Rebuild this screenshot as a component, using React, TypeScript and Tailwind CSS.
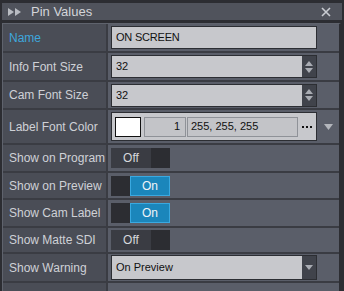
import React from "react";

const font = { fontFamily: '"Liberation Sans", Arial, sans-serif' };

function Row({
  label,
  h,
  active,
  children,
}: {
  label: string;
  h: string;
  active?: boolean;
  children?: React.ReactNode;
}) {
  return (
    <div className={`flex border-b-2 border-[#3a3c43] ${h}`}>
      <div
        className={`flex w-[105px] items-center border-r-2 border-[#3a3c43] bg-[#4a4d56] pl-[6px] text-[12px] ${
          active ? "text-[#3ea6dc]" : "text-[#cfd1d6]"
        }`}
      >
        {label}
      </div>
      <div className="flex flex-1 items-center bg-[#5a5e69] pl-[3px]">{children}</div>
    </div>
  );
}

function TextBox({ value, spin }: { value: string; spin?: boolean }) {
  return (
    <div className="flex h-[23px] w-[206px] items-stretch border border-[#2c2e33] bg-[#c7c8cc]">
      <div className="flex flex-1 items-center pl-[4px] text-[11px] tracking-[-0.2px] text-[#111]">{value}</div>
      {spin && (
        <div className="flex w-[14px] flex-col items-center justify-center gap-[2px] bg-[#40434b]">
          <svg width="8" height="5" viewBox="0 0 8 5">
            <path d="M0 5 L4 0 L8 5 Z" fill="#a9acb3" />
          </svg>
          <svg width="8" height="5" viewBox="0 0 8 5">
            <path d="M0 0 L4 5 L8 0 Z" fill="#a9acb3" />
          </svg>
        </div>
      )}
    </div>
  );
}

function Toggle({ on }: { on: boolean }) {
  return (
    <div className="flex h-[20px] w-[59px] bg-[#2c2d32]">
      {on ? (
        <>
          <div className="w-[19px]" />
          <div className="flex flex-1 items-center justify-center border border-[#3aa9e0] bg-[#1b86bb] text-[12px] text-[#eef4f8]">
            On
          </div>
        </>
      ) : (
        <>
          <div className="flex w-[40px] items-center justify-center bg-[#3a3c43] text-[12px] text-[#d6d8dc]">
            Off
          </div>
          <div className="flex-1" />
        </>
      )}
    </div>
  );
}

export default function App() {
  return (
    <div className="h-[291px] w-[344px] overflow-hidden bg-[#2c2d32]" style={font}>
      {/* header */}
      <div className="mx-[2px] mt-[3px] flex h-[17px] items-center bg-[#50535c]">
        <svg width="14" height="8" viewBox="0 0 14 8" className="ml-[6px]">
          <path d="M0 0 L6 4 L0 8 Z M7 0 L13 4 L7 8 Z" fill="#b9bcc2" />
        </svg>
        <span className="ml-[9px] text-[13px] text-[#d3d5d9]">Pin Values</span>
        <svg width="10" height="10" viewBox="0 0 10 10" className="ml-auto mr-[11px]">
          <path d="M1 1 L9 9 M9 1 L1 9" stroke="#c9ccd2" strokeWidth="1.6" />
        </svg>
      </div>

      {/* panel */}
      <div className="ml-[2px] mt-[3px] w-[339px] border-l border-r-2 border-t border-l-[#5f636d] border-r-[#2c2d32] border-t-[#5f636d] bg-[#5a5e69]">
        <Row label="Name" h="h-[29px]" active>
          <TextBox value="ON SCREEN" />
        </Row>
        <Row label="Info Font Size" h="h-[29px]">
          <TextBox value="32" spin />
        </Row>
        <Row label="Cam Font Size" h="h-[28px]">
          <TextBox value="32" spin />
        </Row>
        <Row label="Label Font Color" h="h-[35px]">
          <div className="flex h-[29px] w-[206px] items-center border border-[#2c2e33] bg-[#c7c8cc] pl-[3px]">
            <div className="h-[20px] w-[26px] border border-[#111] bg-white" />
            <div className="ml-[3px] flex h-[20px] w-[42px] items-center justify-end border border-[#8f9298] bg-[#c3c4c8] pr-[5px] text-[11px] text-[#111]">
              1
            </div>
            <div className="ml-[1px] flex h-[20px] w-[111px] items-center border border-[#8f9298] bg-[#c3c4c8] pl-[3px] text-[11px] text-[#111]">
              255, 255, 255
            </div>
            <div className="ml-[4px] flex items-center gap-[2px]">
              <span className="h-[2px] w-[2px] bg-[#111]" />
              <span className="h-[2px] w-[2px] bg-[#111]" />
              <span className="h-[2px] w-[2px] bg-[#111]" />
            </div>
          </div>
          <svg width="9" height="6" viewBox="0 0 9 6" className="ml-[7px]">
            <path d="M0 0 L9 0 L4.5 6 Z" fill="#b3b6bc" />
          </svg>
        </Row>
        <Row label="Show on Program" h="h-[28px]">
          <Toggle on={false} />
        </Row>
        <Row label="Show on Preview" h="h-[27px]">
          <Toggle on />
        </Row>
        <Row label="Show Cam Label" h="h-[28px]">
          <Toggle on />
        </Row>
        <Row label="Show Matte SDI" h="h-[26px]">
          <Toggle on={false} />
        </Row>
        <Row label="Show Warning" h="h-[29px]">
          <div className="flex h-[25px] w-[206px] items-stretch border border-[#2c2e33] bg-[#c7c8cc]">
            <div className="flex flex-1 items-center pl-[4px] text-[11px] text-[#111]">On Preview</div>
            <div className="flex w-[14px] items-center justify-center bg-[#40434b]">
              <svg width="8" height="5" viewBox="0 0 8 5">
                <path d="M0 0 L4 5 L8 0 Z" fill="#a9acb3" />
              </svg>
            </div>
          </div>
        </Row>
        <Row label="" h="h-[29px]" />
      </div>
    </div>
  );
}
